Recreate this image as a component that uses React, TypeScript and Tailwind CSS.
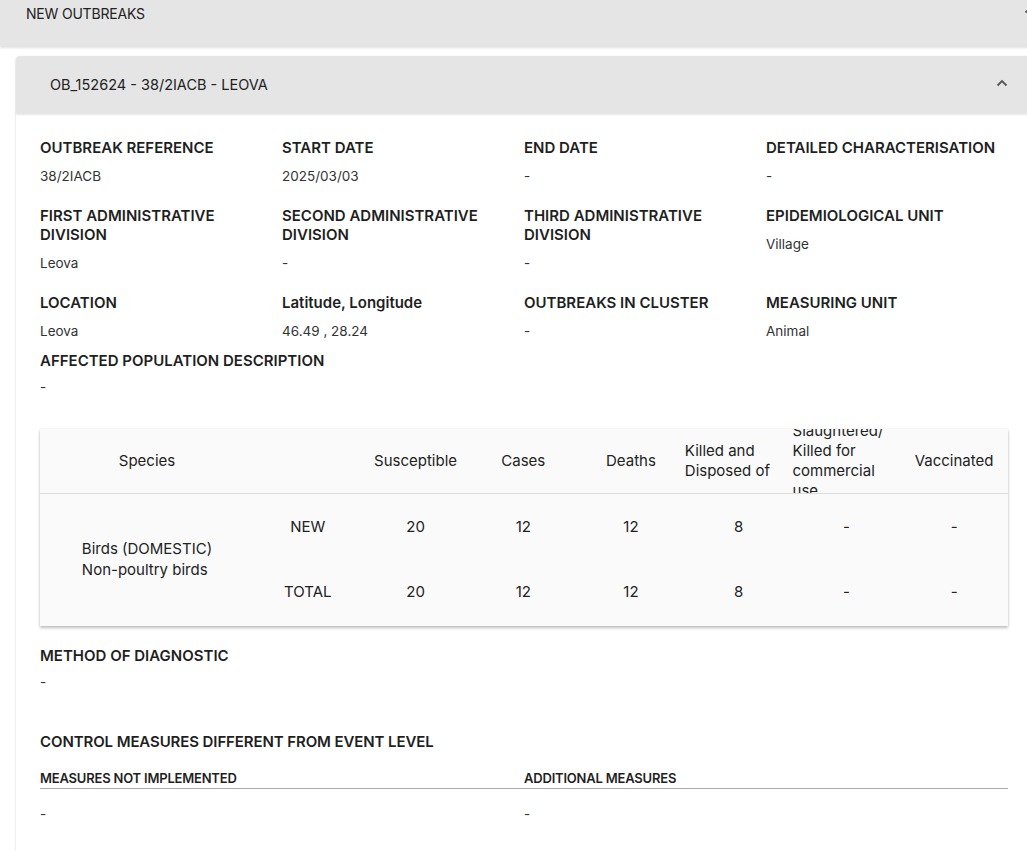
import React from "react";

const font = { fontFamily: "Inter, 'Noto Sans', sans-serif" };

type Field = { label: string; value: string };

const fields: Field[] = [
  { label: "OUTBREAK REFERENCE", value: "38/2IACB" },
  { label: "START DATE", value: "2025/03/03" },
  { label: "END DATE", value: "-" },
  { label: "DETAILED CHARACTERISATION", value: "-" },
  { label: "FIRST ADMINISTRATIVE DIVISION", value: "Leova" },
  { label: "SECOND ADMINISTRATIVE DIVISION", value: "-" },
  { label: "THIRD ADMINISTRATIVE DIVISION", value: "-" },
  { label: "EPIDEMIOLOGICAL UNIT", value: "Village" },
  { label: "LOCATION", value: "Leova" },
  { label: "Latitude, Longitude", value: "46.49 , 28.24" },
  { label: "OUTBREAKS IN CLUSTER", value: "-" },
  { label: "MEASURING UNIT", value: "Animal" },
];

const columns = [
  "Susceptible",
  "Cases",
  "Deaths",
  "Killed and Disposed of",
  "Slaughtered/ Killed for commercial use",
  "Vaccinated",
];

const rows = [
  { kind: "NEW", values: ["20", "12", "12", "8", "-", "-"] },
  { kind: "TOTAL", values: ["20", "12", "12", "8", "-", "-"] },
];

function Chevron({ className }: { className?: string }) {
  return (
    <svg width="12" height="8" viewBox="0 0 12 8" className={className}>
      <path d="M1.5 6.5 6 2l4.5 4.5" fill="none" stroke="#555" strokeWidth="1.8" />
    </svg>
  );
}

function InfoCell({ label, value }: Field) {
  return (
    <div>
      <div className="text-[15px] leading-[19px] font-semibold text-[#1f1f1f]">{label}</div>
      <div className="mt-[10px] text-[13.5px] leading-[19px] text-[#333]">{value}</div>
    </div>
  );
}

function PopulationTable() {
  return (
    <div className="mt-8 bg-[#fafafa] shadow-[0_2px_3px_rgba(0,0,0,0.25),0_0_2px_rgba(0,0,0,0.08)]">
      <table className="w-full table-fixed border-collapse text-[15px] text-[#222]">
        <colgroup>
          <col className="w-[214px]" />
          <col />
          <col />
          <col />
          <col />
          <col />
          <col />
          <col />
        </colgroup>
        <thead>
          <tr className="border-b border-[#dcdcdc]">
            <th className="h-16 p-0 font-normal">
              <div className="h-16 flex items-center justify-center">Species</div>
            </th>
            <th className="h-16 p-0" />
            {columns.map((c) => (
              <th key={c} className="h-16 p-0 font-normal">
                <div className="h-16 overflow-hidden flex items-center justify-center">
                  <div className="text-left leading-5">{c}</div>
                </div>
              </th>
            ))}
          </tr>
        </thead>
        <tbody>
          {rows.map((r, i) => (
            <tr key={r.kind}>
              {i === 0 && (
                <td rowSpan={2} className="p-0 text-center">
                  <div className="inline-block text-left leading-[21px]">
                    Birds (DOMESTIC)
                    <br />
                    Non-poultry birds
                  </div>
                </td>
              )}
              <td className="h-[66px] p-0 text-center">{r.kind}</td>
              {r.values.map((v, j) => (
                <td key={j} className="h-[66px] p-0 text-center">
                  {v}
                </td>
              ))}
            </tr>
          ))}
        </tbody>
      </table>
    </div>
  );
}

export default function App() {
  return (
    <div className="w-full min-h-[851px] overflow-hidden bg-white" style={font}>
      <div className="w-[1048px]">
        {/* parent accordion summary */}
        <div className="h-[46px] bg-[#e5e5e5] shadow-[0_2px_2px_rgba(0,0,0,0.12)] pl-[26px] pr-[12px] pt-[4px] flex justify-between">
          <span className="text-[14px] leading-5 tracking-[-0.2px] text-[#222]">NEW OUTBREAKS</span>
          <Chevron className="mt-[2px]" />
        </div>

        {/* outbreak accordion */}
        <div className="mx-4 mt-[10px] rounded-t-[4px] bg-white shadow-[0_2px_1px_-1px_rgba(0,0,0,0.2),0_1px_1px_rgba(0,0,0,0.14),0_1px_3px_rgba(0,0,0,0.12)]">
          <div className="h-[57px] rounded-t-[4px] bg-[#e5e5e5] shadow-[0_2px_2px_rgba(0,0,0,0.1)] pl-[34px] pr-[24px] flex items-center justify-between">
            <span className="text-[14.5px] leading-5 text-[#222] mt-[1px]">
              OB_152624 - 38/2IACB - LEOVA
            </span>
            <Chevron className="-mt-[4px]" />
          </div>

          <div className="px-6 pt-[25px] pb-10">
            <div className="grid grid-cols-4 gap-y-5">
              {fields.map((f) => (
                <InfoCell key={f.label} {...f} />
              ))}
            </div>

            <div className="mt-[10px]">
              <div className="text-[15px] leading-[19px] font-semibold text-[#1f1f1f]">
                AFFECTED POPULATION DESCRIPTION
              </div>
              <div className="mt-2 text-[13.5px] leading-[19px] text-[#333]">-</div>
            </div>

            <PopulationTable />

            <div className="mt-5">
              <div className="text-[15px] leading-[19px] font-semibold text-[#1f1f1f]">
                METHOD OF DIAGNOSTIC
              </div>
              <div className="mt-2 text-[13.5px] leading-[19px] text-[#333]">-</div>
            </div>

            <div className="mt-10 text-[15px] leading-[19px] font-semibold tracking-[-0.1px] text-[#1f1f1f]">
              CONTROL MEASURES DIFFERENT FROM EVENT LEVEL
            </div>
            <div className="mt-[19px] grid grid-cols-2 border-b border-[#a8a8a8] pb-[2px]">
              <div className="text-[13px] leading-4 font-semibold tracking-[-0.2px] text-[#1f1f1f]">
                MEASURES NOT IMPLEMENTED
              </div>
              <div className="text-[13px] leading-4 font-semibold tracking-[-0.2px] text-[#1f1f1f]">
                ADDITIONAL MEASURES
              </div>
            </div>
            <div className="mt-4 grid grid-cols-2 text-[13.5px] leading-[19px] text-[#333]">
              <div>-</div>
              <div>-</div>
            </div>
          </div>
        </div>
      </div>
    </div>
  );
}
